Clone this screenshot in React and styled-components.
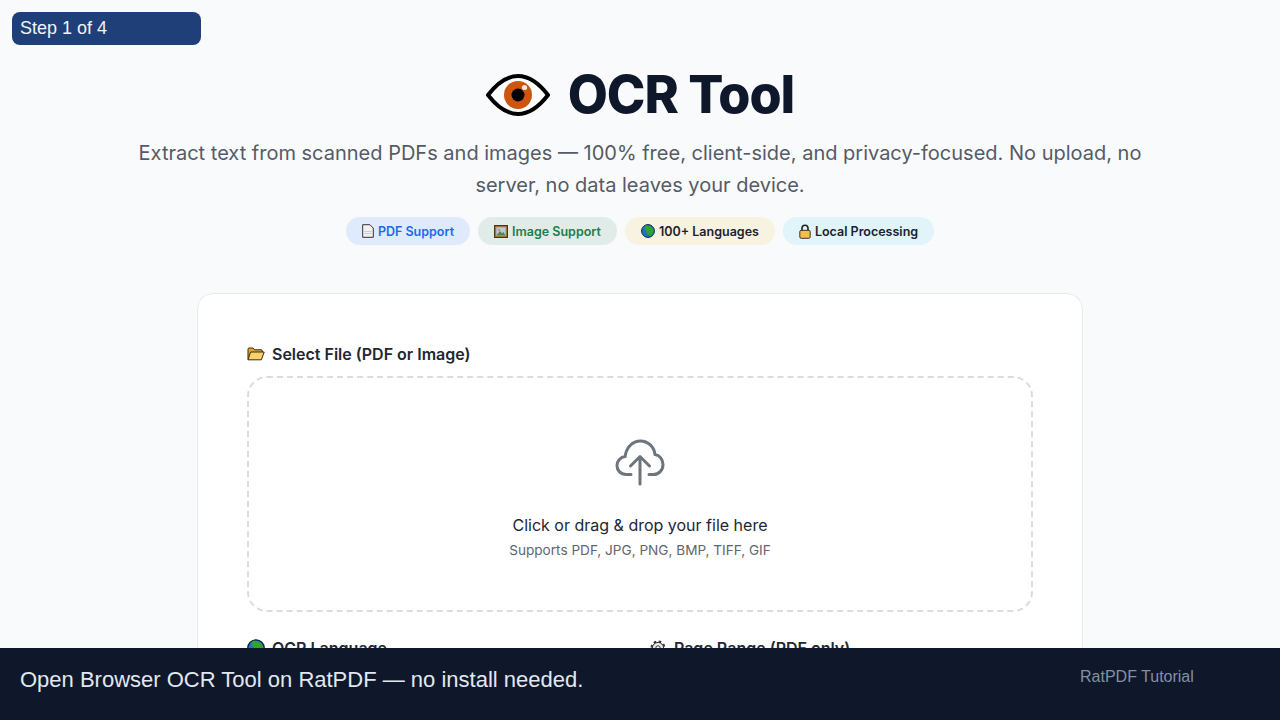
import styled, { createGlobalStyle } from "styled-components";

const GlobalStyle = createGlobalStyle`
  html, body {
    margin: 0;
    height: 100%;
    overflow: hidden;
    background: #f9fafc;
  }
  * {
    box-sizing: border-box;
  }
`;

const EyeIcon = () => (
  <svg width="64" height="44" viewBox="0 0 64 44">
    <path d="M2 22C12 9 21 3 32 3s20 6 30 19C52 35 43 41 32 41S12 35 2 22Z" fill="#fff" stroke="#000" strokeWidth="4" strokeLinejoin="round" />
    <circle cx="32" cy="22" r="14" fill="#cc5510" />
    <circle cx="32" cy="22" r="6.5" fill="#000" />
    <circle cx="38.5" cy="14.5" r="2.6" fill="#f4e6dc" />
  </svg>
);

const PageIcon = () => (
  <svg width="12" height="14" viewBox="0 0 12 14">
    <path d="M.7.7h7.2l3.4 3.4v9.2H.7Z" fill="#f1f1f1" stroke="#333" strokeWidth="1" />
    <path d="M2.5 7.5h7M2.5 9.5h7" stroke="#ccc" strokeWidth="1" />
  </svg>
);

const PictureIcon = () => (
  <svg width="14" height="13" viewBox="0 0 14 13">
    <rect x=".6" y=".6" width="12.8" height="11.8" fill="#b08a3e" stroke="#4a3510" strokeWidth="1.2" />
    <rect x="2.4" y="2.4" width="9.2" height="8.2" fill="#b9c9dc" />
    <path d="M2.4 10.6 6 6l2 2.2 1.4-1.2 2.2 3.6Z" fill="#4e8a45" />
    <circle cx="5" cy="5" r="1.1" fill="#d76b8c" />
  </svg>
);

const GlobeIcon = ({ size = 14 }) => (
  <svg width={size} height={size} viewBox="0 0 14 14">
    <circle cx="7" cy="7" r="6.4" fill="#1c76c4" stroke="#123" strokeWidth="1" />
    <path d="M5 1.4c3 0 6.4 1.4 7.6 4.6.3 2.2-.8 3.4-2 5-1 .8-2 1-2.6 1.2C7.4 10 6 9 5.6 7.4 5 6 4 5 3.4 3.4 3.8 2.4 4.2 1.8 5 1.4Z" fill="#2fa52f" />
  </svg>
);

const LockIcon = () => (
  <svg width="12" height="15" viewBox="0 0 12 15">
    <path d="M3 7V4.2a3 3 0 0 1 6 0V7" fill="none" stroke="#222" strokeWidth="1.6" />
    <rect x=".8" y="6.3" width="10.4" height="8" rx="1.4" fill="#f3bd4f" stroke="#222" strokeWidth=".9" />
  </svg>
);

const FolderIcon = () => (
  <svg width="18" height="14" viewBox="0 0 18 14">
    <path d="M1 12.6V2.2C1 1.5 1.4 1 2.1 1h4l1.6 1.8h6.6c.6 0 1 .4 1 1V5" fill="#e0a63c" stroke="#3b2a0c" strokeWidth="1" />
    <path d="M1 12.8 3.6 5h13.6l-2.8 7.8Z" fill="#fbd269" stroke="#3b2a0c" strokeWidth="1" strokeLinejoin="round" />
  </svg>
);

const GearIcon = () => (
  <svg width="18" height="18" viewBox="0 0 18 18">
    <circle cx="9" cy="9" r="6" fill="#ddd" stroke="#333" strokeWidth="3" strokeDasharray="2.4 2.3" />
    <circle cx="9" cy="9" r="5.6" fill="#e8e8e8" stroke="#333" strokeWidth="1" />
    <circle cx="9" cy="9" r="2.2" fill="#fff" stroke="#333" strokeWidth="1" />
  </svg>
);

const CloudUploadIcon = () => (
  <svg width="50" height="48" viewBox="0 0 50 48" fill="none" stroke="#6c757d" strokeWidth="3" strokeLinecap="round" strokeLinejoin="round">
    <path d="M16 36.5H11C5.8 36.5 2 32.6 2 27.6c0-4.8 3.6-8.6 8.2-9C11 10 17.4 3 25.4 3c7.6 0 13.8 6 14.6 13.6 4.6.6 8 4.8 8 9.8 0 5.8-4.2 10.1-9.6 10.1H34" />
    <path d="M25 46V19M15.5 28 25 18.5 34.5 28" />
  </svg>
);

export default function App() {
  return (
    <>
      <GlobalStyle />
      <StepBadge>Step 1 of 4</StepBadge>
      <Page>
        <Hero>
          <Title>
            <EyeIcon />
            <span>OCR Tool</span>
          </Title>
          <Subtitle>
            Extract text from scanned PDFs and images — 100% free, client-side, and privacy-focused. No upload, no server, no data leaves your device.
          </Subtitle>
          <Badges>
            <Badge $bg="#e0eafd" $color="#1a6ce8"><PageIcon />PDF Support</Badge>
            <Badge $bg="#e1ece8" $color="#1c7c52"><PictureIcon />Image Support</Badge>
            <Badge $bg="#f8f2e0" $color="#1a2233"><GlobeIcon />100+ Languages</Badge>
            <Badge $bg="#e1f4fa" $color="#1a2233"><LockIcon />Local Processing</Badge>
          </Badges>
        </Hero>

        <Card>
          <Label><FolderIcon />Select File (PDF or Image)</Label>
          <DropZone>
            <CloudUploadIcon />
            <DropTitle>Click or drag &amp; drop your file here</DropTitle>
            <DropHint>Supports PDF, JPG, PNG, BMP, TIFF, GIF</DropHint>
          </DropZone>
          <Options>
            <Label><GlobeIcon size={18} />OCR Language</Label>
            <Label><GearIcon />Page Range (PDF only)</Label>
          </Options>
        </Card>
      </Page>

      <Caption>
        <CaptionText>Open Browser OCR Tool on RatPDF — no install needed.</CaptionText>
        <CaptionBrand>RatPDF Tutorial</CaptionBrand>
      </Caption>
    </>
  );
}

const StepBadge = styled.div`
  position: fixed;
  top: 12px;
  left: 12px;
  width: 189px;
  height: 33px;
  padding: 0 8px;
  border-radius: 8px;
  background: #1e3f78;
  color: #f1f5f9;
  font: 18px/33px "Liberation Sans", Arial, sans-serif;
  z-index: 2;
`;

const Page = styled.main`
  height: 720px;
  overflow: hidden;
  padding-top: 64px;
  font-family: Inter, "Noto Sans", sans-serif;
`;

const Hero = styled.header`
  display: flex;
  flex-direction: column;
  align-items: center;
`;

const Title = styled.h1`
  display: flex;
  align-items: center;
  gap: 18px;
  margin: 0;
  color: #0f172a;
  font-size: 52px;
  line-height: 62px;
  font-weight: 800;
  letter-spacing: -1.04px;
`;

const Subtitle = styled.p`
  width: 1060px;
  margin: 11px 0 0;
  color: #555b66;
  font-size: 20px;
  line-height: 32px;
  text-align: center;
`;

const Badges = styled.div`
  display: flex;
  gap: 8px;
  margin-top: 16px;
`;

const Badge = styled.span`
  display: flex;
  align-items: center;
  justify-content: center;
  gap: 4px;
  height: 28px;
  padding: 0 16px;
  border-radius: 14px;
  background: ${(props) => props.$bg};
  color: ${(props) => props.$color};
  font-size: 12.5px;
  font-weight: 600;
`;

const Card = styled.section`
  width: 886px;
  margin: 48px auto 0;
  padding: 48px 49px;
  background: #fff;
  border: 1px solid #e7e9ee;
  border-radius: 16px;
`;

const Label = styled.div`
  display: flex;
  align-items: center;
  gap: 7px;
  height: 24px;
  color: #212733;
  font-size: 16px;
  font-weight: 600;
`;

const DropZone = styled.div`
  display: flex;
  flex-direction: column;
  align-items: center;
  height: 236px;
  margin-top: 10px;
  padding-top: 60px;
  border: 2px dashed #dcdcdc;
  border-radius: 20px;
`;

const DropTitle = styled.div`
  margin-top: 27px;
  color: #212733;
  font-size: 16px;
  line-height: 24px;
`;

const DropHint = styled.div`
  margin-top: 3px;
  color: #5f6670;
  font-size: 13.6px;
  line-height: 20px;
`;

const Options = styled.div`
  display: grid;
  grid-template-columns: 1fr 1fr;
  column-gap: 18px;
  margin-top: 24px;
`;

const Caption = styled.footer`
  position: fixed;
  left: 0;
  right: 0;
  bottom: 0;
  display: flex;
  height: 72px;
  background: #0f172a;
  font-family: "Liberation Sans", Arial, sans-serif;
  z-index: 2;
`;

const CaptionText = styled.div`
  flex: 1;
  padding: 19px 0 0 20px;
  color: #e2e8f0;
  font-size: 22px;
  line-height: 26px;
`;

const CaptionBrand = styled.div`
  width: 200px;
  padding-top: 19px;
  color: #8390a5;
  font-size: 16px;
  line-height: 20px;
`;
